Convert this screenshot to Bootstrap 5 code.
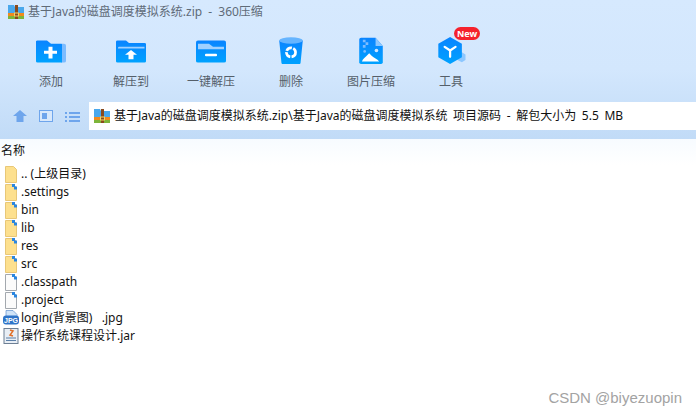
<!DOCTYPE html>
<html lang="zh-CN">
<head>
    <meta charset="UTF-8">
    <meta name="viewport" content="width=device-width, initial-scale=1.0">
    <title>360压缩</title>
    <link href="https://cdn.jsdelivr.net/npm/bootstrap@5.3.0/dist/css/bootstrap.min.css" rel="stylesheet">
    <style>
        html, body { height: 100%; }
        body { font-family: "Noto Sans", "Noto Sans CJK SC", sans-serif; font-size: 12px; color: #111; background: #fff; overflow: hidden; }
        .app-shell { position: relative; width: 696px; height: 418px; }
        .app-top { height: 139px; background: linear-gradient(#d6e9fe, #d3e7fd 50%, #c1dbf7); }
        .app-title { height: 24px; padding-left: 8px; gap: 4px; color: #5f6b78; word-spacing: 3px; }
        .tool-row { height: 78px; padding-left: 11px; }
        .tool-item { width: 80px; height: 78px; padding-top: 12px; color: #555f6a; position: relative; }
        .tool-icon { width: 32px; height: 29px; }
        .tool-folder { width: 32px; height: 25px; margin-top: 3px; margin-bottom: 1px; }
        .tool-label { margin-top: 8px; line-height: 18px; white-space: nowrap; }
        .new-tag { position: absolute; left: 43px; top: 3px; width: 26px; height: 13px; border-radius: 7px; background: #f5222d; color: #fff; font-size: 9px; font-weight: 700; line-height: 13px; text-align: center; }
        .addr-row { height: 28px; }
        .nav-icons { width: 89px; padding-left: 13px; gap: 12px; }
        .addr-box { background: #fff; height: 28px; padding-left: 5px; gap: 4px; color: #111; white-space: pre; word-spacing: 2.500px; }
        .list-head { height: 26px; line-height: 24px; padding-left: 1px; background: linear-gradient(#f7fbff, #fff); }
        .file-list { padding: 0 0 0 5px; margin: 0; list-style: none; }
        .file-row { height: 18px; gap: 4px; line-height: 18px; white-space: pre; }
        .file-row svg { flex: none; }
        .file-row.wide-icon { margin-left: -2px; gap: 2px; }
        .mark-text { position: absolute; right: 14px; bottom: 9px; color: #a3a3a3; font-family: "Liberation Sans", sans-serif; font-size: 15px; }
    </style>
</head>
<body>
    <svg width="0" height="0" class="position-absolute">
        <defs>
            <linearGradient id="blueFill" x1="0" y1="0" x2="0" y2="1">
                <stop offset="0" stop-color="#0a84ff"/>
                <stop offset="1" stop-color="#00a2ff"/>
            </linearGradient>
            <symbol id="zipIcon" viewBox="0 0 16 16">
                <path d="M0 1h6l1 2h9v7H0z" fill="#4aa8ec"/>
                <rect y="9" width="16" height="3" fill="#f08a1d"/>
                <rect y="12" width="16" height="3" fill="#7db53a"/>
                <rect x="7" y="1" width="3" height="14" fill="#8a4a1c"/>
                <rect x="6.500" y="9" width="4" height="3" fill="none" stroke="#f2d36b"/>
            </symbol>
            <symbol id="folderIcon" viewBox="0 0 12 17" preserveAspectRatio="none">
                <path d="M.5.500h8l3 3v13H.5z" fill="#fde08e" stroke="#e8c777"/>
            </symbol>
            <symbol id="folderSync" viewBox="0 0 12 17" preserveAspectRatio="none">
                <path d="M.5.500h8l3 3v13H.5z" fill="#fde08e" stroke="#e8c777"/>
                <path d="M7 0h3v2.500h2v3H9V3H7z" fill="#2a86e0"/>
            </symbol>
            <symbol id="fileSync" viewBox="0 0 12 17" preserveAspectRatio="none">
                <path d="M.5.500h8l3 3v13H.5z" fill="#fbfbfb" stroke="#a3a8ae"/>
                <path d="M7 0h3v2.500h2v3H9V3H7z" fill="#2a86e0"/>
            </symbol>
        </defs>
    </svg>

    <div class="app-shell">
        <div class="app-top">
            <div class="app-title d-flex align-items-center">
                <svg width="16" height="16"><use href="#zipIcon"/></svg>
                <span>基于Java的磁盘调度模拟系统.zip - 360压缩</span>
            </div>
            <div class="tool-row d-flex">
                <div class="tool-item d-flex flex-column align-items-center">
                    <svg class="tool-folder" viewBox="0 0 32 32" preserveAspectRatio="none">
                        <path d="M26 6h3a2 2 0 0 1 2 2v20a2 2 0 0 1-2 2h-3z" fill="#7cbcff"/>
                        <path d="M1 3a1.500 1.500 0 0 1 1.500-1H12l4 4h10a1 1 0 0 1 1 1v23H2.500A1.500 1.500 0 0 1 1 28.500z" fill="url(#blueFill)"/>
                        <path d="M9 15h4.500V10h4v5H22v4h-4.500v6h-4v-6H9z" fill="#fff"/>
                    </svg>
                    <div class="tool-label">添加</div>
                </div>
                <div class="tool-item d-flex flex-column align-items-center">
                    <svg class="tool-folder" viewBox="0 0 32 32" preserveAspectRatio="none">
                        <path d="M1 3.500A1.500 1.500 0 0 1 2.500 2H11l3 3h15.500A1.500 1.500 0 0 1 31 6.500v22a1.500 1.500 0 0 1-1.500 1.500h-27A1.500 1.500 0 0 1 1 28.500z" fill="url(#blueFill)"/>
                        <path d="M3 11.500c0-1 .6-1.500 1.500-1.500h25v2H3z" fill="#9fd0ff"/>
                        <path d="M16 14l6 6h-3.500v6h-5v-6H10z" fill="#fff"/>
                    </svg>
                    <div class="tool-label">解压到</div>
                </div>
                <div class="tool-item d-flex flex-column align-items-center">
                    <svg class="tool-folder" viewBox="0 0 32 32" preserveAspectRatio="none">
                        <rect x="1" y="2" width="30" height="28" rx="2" fill="url(#blueFill)"/>
                        <path d="M3 6h11l4 4h11v3H3z" fill="#9fd0ff"/>
                        <rect x="10" y="19" width="12" height="3" rx="1" fill="#fff"/>
                    </svg>
                    <div class="tool-label">一键解压</div>
                </div>
                <div class="tool-item d-flex flex-column align-items-center">
                    <svg class="tool-icon" viewBox="0 0 32 32">
                        <path d="M3 5l2.500 25a2 2 0 0 0 2 1h17a2 2 0 0 0 2-1L29 5z" fill="url(#blueFill)"/>
                        <ellipse cx="16" cy="5" rx="13" ry="3.500" fill="#66b5ff"/>
                        <circle cx="16" cy="18" r="5" fill="none" stroke="#fff" stroke-width="3" stroke-dasharray="7 1.500"/>
                    </svg>
                    <div class="tool-label">删除</div>
                </div>
                <div class="tool-item d-flex flex-column align-items-center">
                    <svg class="tool-icon" viewBox="0 0 32 32">
                        <path d="M5 2h16l8 9v18a2 2 0 0 1-2 2H5a2 2 0 0 1-2-2V4a2 2 0 0 1 2-2z" fill="url(#blueFill)"/>
                        <path d="M21 2l8 9h-8z" fill="#8cc7ff"/>
                        <path d="M7 4h3v3H7zM10 7h3v3h-3zM7 10h3v3H7z" fill="#7cbcff"/>
                        <circle cx="22" cy="16" r="2" fill="#cfe6ff"/>
                        <circle cx="9" cy="17" r="1.500" fill="#7cbcff"/>
                        <path d="M6 28c1-3 3-4 5-6l3-3 3 3c2 2 6 3 8 6z" fill="#fff"/>
                    </svg>
                    <div class="tool-label">图片压缩</div>
                </div>
                <div class="tool-item d-flex flex-column align-items-center">
                    <svg class="tool-icon" viewBox="0 0 32 32">
                        <path d="M28 18l4 2.500v6L28 29l-5-2.500v-6z" fill="#8cc7ff"/>
                        <path d="M15 1l13 7.500v15L15 31 2 23.500v-15z" fill="url(#blueFill)"/>
                        <path d="M15 16v7M15 16l-6-4M15 16l6-4" stroke="#fff" stroke-width="2.500" stroke-linecap="round" fill="none"/>
                    </svg>
                    <div class="tool-label">工具</div>
                    <span class="new-tag">New</span>
                </div>
            </div>
            <div class="addr-row d-flex">
                <div class="nav-icons d-flex align-items-center">
                    <svg width="14" height="12" viewBox="0 0 14 12"><path d="M7 0l7 6h-3.500v6h-7V6H0z" fill="#6ea5ec"/></svg>
                    <svg width="14" height="12" viewBox="0 0 14 12"><rect x=".5" y=".5" width="13" height="11" fill="#d8e8fb" stroke="#6ea5ec"/><rect x="3" y="3" width="5" height="6" fill="#6ea5ec"/></svg>
                    <svg width="15" height="11" viewBox="0 0 15 11"><path d="M0 1h2v2H0zM4 1h11v2H4zM0 5h2v2H0zM4 5h11v2H4zM0 9h2v2H0zM4 9h11v2H4z" fill="#6ea5ec"/></svg>
                </div>
                <div class="addr-box d-flex align-items-center flex-grow-1">
                    <svg width="16" height="16"><use href="#zipIcon"/></svg>
                    <span>基于Java的磁盘调度模拟系统.zip\基于Java的磁盘调度模拟系统 项目源码 - 解包大小为 5.5 MB</span>
                </div>
            </div>
        </div>
        <div class="list-head">名称</div>
        <ul class="file-list">
            <li class="file-row d-flex align-items-center"><svg width="12" height="17"><use href="#folderIcon"/></svg><span>.. (上级目录)</span></li>
            <li class="file-row d-flex align-items-center"><svg width="12" height="17"><use href="#folderSync"/></svg><span>.settings</span></li>
            <li class="file-row d-flex align-items-center"><svg width="12" height="17"><use href="#folderSync"/></svg><span>bin</span></li>
            <li class="file-row d-flex align-items-center"><svg width="12" height="17"><use href="#folderSync"/></svg><span>lib</span></li>
            <li class="file-row d-flex align-items-center"><svg width="12" height="17"><use href="#folderSync"/></svg><span>res</span></li>
            <li class="file-row d-flex align-items-center"><svg width="12" height="17"><use href="#folderSync"/></svg><span>src</span></li>
            <li class="file-row d-flex align-items-center"><svg width="12" height="17"><use href="#fileSync"/></svg><span>.classpath</span></li>
            <li class="file-row d-flex align-items-center"><svg width="12" height="17"><use href="#fileSync"/></svg><span>.project</span></li>
            <li class="file-row wide-icon d-flex align-items-center">
                <svg width="16" height="16" viewBox="0 0 16 16"><path d="M3 .5h7l4 4v3H3z" fill="#cfe3f8" stroke="#4a82c8" stroke-width=".6"/><rect y="5.500" width="16" height="9" rx="3" fill="#2f74c8"/><text x="8" y="12.500" text-anchor="middle" font-family="Liberation Sans, sans-serif" font-size="7" font-weight="700" fill="#fff">JPG</text></svg>
                <span>login(背景图)&nbsp;&nbsp;&nbsp;.jpg</span>
            </li>
            <li class="file-row wide-icon d-flex align-items-center">
                <svg width="16" height="16" viewBox="0 0 16 16"><rect x="1" y=".5" width="14" height="15" fill="#e8eef5" stroke="#6d7f94"/><path d="M7 2l3 1-3 4 3 1" fill="none" stroke="#e0702a" stroke-width="1.500"/><path d="M3 10h10M3 12.500h10" stroke="#5b7fa8" stroke-width="1.200"/></svg>
                <span>操作系统课程设计.jar</span>
            </li>
        </ul>
        <div class="mark-text">CSDN @biyezuopin</div>
    </div>
    <script src="https://cdn.jsdelivr.net/npm/bootstrap@5.3.0/dist/js/bootstrap.bundle.min.js"></script>
</body>
</html>
